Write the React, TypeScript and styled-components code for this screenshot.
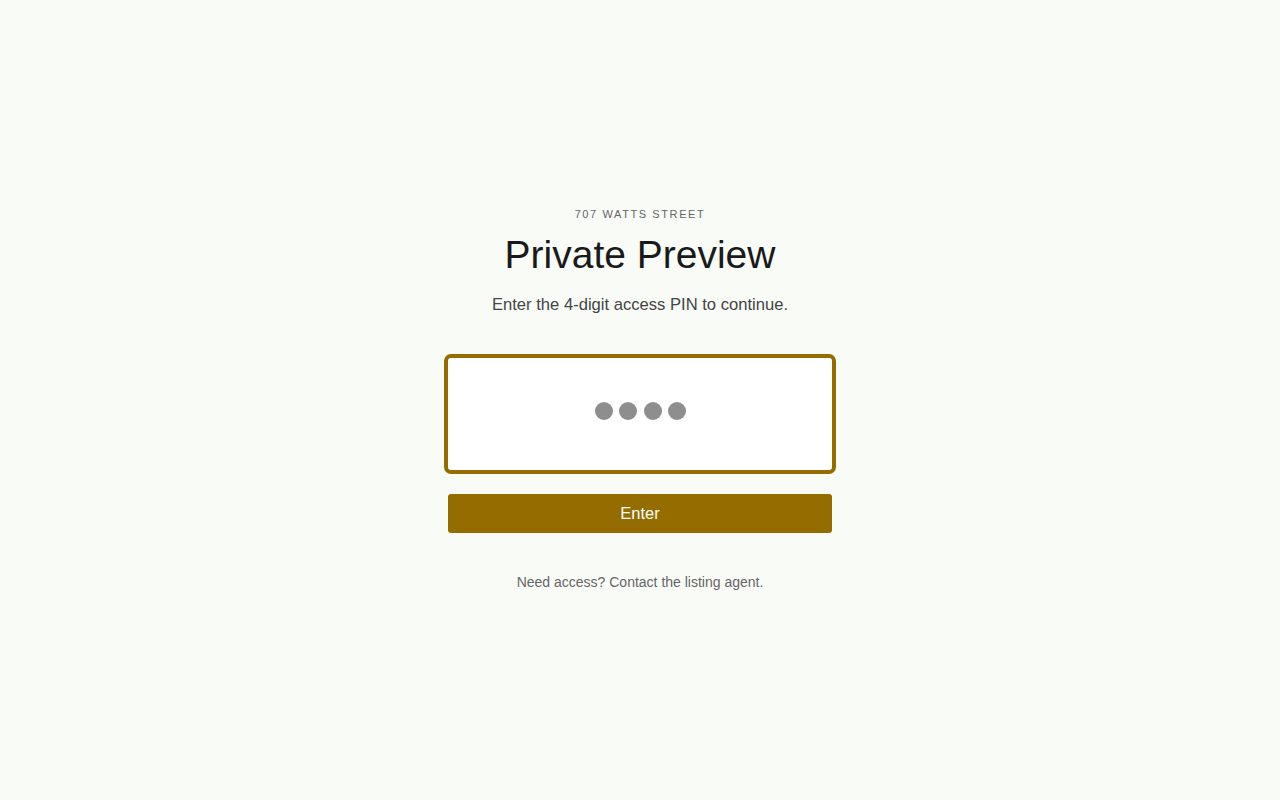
import React from "react";
import styled, { createGlobalStyle } from "styled-components";

const GlobalStyle = createGlobalStyle`
  html, body {
    margin: 0;
    padding: 0;
    background: #f9fbf7;
    font-family: "Liberation Sans", Arial, sans-serif;
  }
`;

const Page = styled.main`
  min-height: 100vh;
  box-sizing: border-box;
  padding-bottom: 3px;
  display: flex;
  align-items: center;
  justify-content: center;
`;

const Panel = styled.div`
  width: 384px;
  display: flex;
  flex-direction: column;
  align-items: center;
  text-align: center;
`;

const Eyebrow = styled.div`
  font-size: 11px;
  line-height: 16px;
  letter-spacing: 1.6px;
  text-transform: uppercase;
  color: #666666;
`;

const Title = styled.h1`
  margin: 9px 0 0;
  font-size: 39px;
  line-height: 48px;
  font-weight: 400;
  color: #1a1a1a;
`;

const Subtitle = styled.p`
  margin: 14px 0 0;
  font-size: 16.6px;
  line-height: 24px;
  color: #444444;
`;

const PinBox = styled.div`
  margin-top: 41px;
  width: 100%;
  height: 112px;
  box-sizing: border-box;
  padding: 0 0 5px 1px;
  background: #ffffff;
  border-radius: 3px;
  box-shadow: 0 0 0 4px #946c00;
  display: flex;
  align-items: center;
  justify-content: center;
  gap: 6.5px;
`;

const Dot = styled.span`
  width: 18px;
  height: 18px;
  border-radius: 50%;
  background: #8e8e8e;
`;

const EnterButton = styled.button`
  margin-top: 24px;
  width: 100%;
  height: 39px;
  border: none;
  border-radius: 3px;
  background: #946c00;
  color: #ffffff;
  font-family: inherit;
  font-size: 16.5px;
  cursor: pointer;
`;

const Footer = styled.p`
  margin: 39px 0 0;
  font-size: 14px;
  line-height: 20px;
  color: #666666;
`;

const App = () => {
  return (
    <>
      <GlobalStyle />
      <Page>
        <Panel>
          <Eyebrow>707 Watts Street</Eyebrow>
          <Title>Private Preview</Title>
          <Subtitle>Enter the 4-digit access PIN to continue.</Subtitle>
          <PinBox>
            {[0, 1, 2, 3].map((i) => (
              <Dot key={i} />
            ))}
          </PinBox>
          <EnterButton>Enter</EnterButton>
          <Footer>Need access? Contact the listing agent.</Footer>
        </Panel>
      </Page>
    </>
  );
};

export default App;
